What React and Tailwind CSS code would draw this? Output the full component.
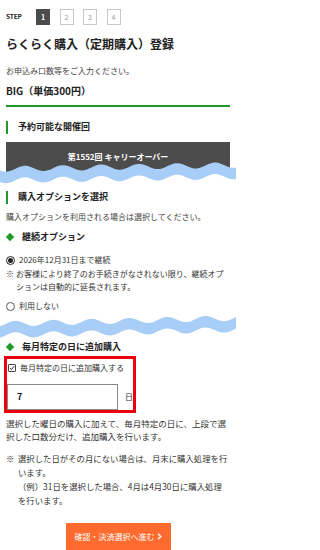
import React from 'react';

// Torn-edge marker: a light blue wavy ribbon drawn across the page
function Wave({ base, slope, phase, className }) {
  const top = [];
  const bottom = [];
  for (let x = 0; x <= 236; x += 2) {
    const y = base - slope * (x / 236) + 2.8 * Math.sin((2 * Math.PI * x) / 38 + phase);
    top.push(`${x},${y.toFixed(2)}`);
    bottom.unshift(`${x},${(y + 11.5).toFixed(2)}`);
  }
  const d = `M${top.join(' L')} L${bottom.join(' L')} Z`;
  return (
    <svg width="236" height="24" viewBox="0 0 236 24" className={`relative block -ml-[6px] ${className}`}>
      <path d={d} fill="#a8cdf6" />
    </svg>
  );
}

function SectionHeading({ children, className = '' }) {
  return (
    <div className={`flex items-center h-[14px] ${className}`}>
      <span className="w-[2px] h-[13px] bg-[#1f9a2a]" />
      <span className="ml-[10px] text-[9px] leading-[14px] font-bold text-[#222]">{children}</span>
    </div>
  );
}

function DiamondHeading({ children, className = '' }) {
  return (
    <div className={`flex items-center h-[14px] ${className}`}>
      <span className="ml-[1px] w-[6px] h-[6px] rotate-45 bg-[#1f9a2a]" />
      <span className="ml-[9px] text-[9px] leading-[14px] font-bold text-[#222]">{children}</span>
    </div>
  );
}

export default function App() {
  return (
    <div className="w-[236px] h-[550px] overflow-hidden bg-white px-[6px] font-['Noto_Sans_CJK_JP','Noto_Sans',sans-serif] text-[#333]">
      {/* Step indicator */}
      <div className="flex items-center pt-[9px]">
        <span className="w-[30px] text-[6.5px] font-bold text-[#222] tracking-tight">STEP</span>
        <div className="flex gap-[9.5px]">
          {[1, 2, 3, 4].map((n) =>
            n === 1 ? (
              <span key={n} className="w-[14px] h-[16px] flex items-center justify-center bg-[#4c4c4c] text-white text-[7px] font-bold">
                {n}
              </span>
            ) : (
              <span key={n} className="w-[14px] h-[16px] flex items-center justify-center border border-[#c8c8c8] text-[#9a9a9a] text-[7px]">
                {n}
              </span>
            )
          )}
        </div>
      </div>

      <h1 className="mt-[11px] text-[12px] leading-[16px] font-bold text-[#222] whitespace-nowrap">らくらく購入（定期購入）登録</h1>
      <p className="mt-[13px] text-[8px] leading-[12px] text-[#444]">お申込み口数等をご入力ください。</p>
      <p className="mt-[7px] text-[10px] leading-[14px] font-bold text-[#222]">BIG（単価300円）</p>
      <div className="mt-[7px] h-[2px] bg-[#1f9a2a]" />

      <SectionHeading className="mt-[13px]">予約可能な開催回</SectionHeading>
      <div className="mt-[8px] h-[30px] bg-[#4c4c4c] flex justify-center pt-[9px]">
        <span className="text-[8px] leading-[12px] font-bold text-white">第1552回 キャリーオーバー</span>
      </div>
      <Wave base={9} slope={4} phase={0.6} className="-mt-[12px]" />

      <SectionHeading className="mt-[6px]">購入オプションを選択</SectionHeading>
      <p className="mt-[7px] text-[8px] leading-[12px] text-[#444] whitespace-nowrap">購入オプションを利用される場合は選択してください。</p>

      <DiamondHeading className="mt-[7px]">継続オプション</DiamondHeading>
      <label className="mt-[9px] flex items-center h-[14px]">
        <span className="w-[9px] h-[9px] rounded-full border border-[#222] flex items-center justify-center">
          <span className="w-[5px] h-[5px] rounded-full bg-[#222]" />
        </span>
        <span className="ml-[4px] text-[8px] leading-[14px] text-[#333]">2026年12月31日まで継続</span>
      </label>
      <div className="flex text-[8px] leading-[13px] text-[#333]">
        <span className="w-[10px] shrink-0">※</span>
        <span>お客様により終了のお手続きがなされない限り、継続オプションは自動的に延長されます。</span>
      </div>
      <label className="mt-[6px] flex items-center h-[14px]">
        <span className="w-[9px] h-[9px] rounded-full border border-[#555]" />
        <span className="ml-[4px] text-[8px] leading-[14px] text-[#333]">利用しない</span>
      </label>
      <Wave base={10} slope={6} phase={2.2} className="mt-[1px]" />

      <DiamondHeading className="mt-[2px]">毎月特定の日に追加購入</DiamondHeading>

      {/* Highlighted input block */}
      <div className="mt-[2px] -ml-[2px] w-[132px] border-[3px] border-[#e8000e]">
        <label className="mt-[2px] flex items-center h-[14px] pl-[1px]">
          <span className="w-[8px] h-[8px] border border-[#444] rounded-[1px] flex items-center justify-center">
            <svg width="6" height="6" viewBox="0 0 6 6">
              <path d="M0.8 3.1 L2.4 4.6 L5.2 1.2" fill="none" stroke="#222" strokeWidth="1" />
            </svg>
          </span>
          <span className="ml-[4px] text-[8px] leading-[14px] text-[#333]">毎月特定の日に追加購入する</span>
        </label>
        <div className="mt-[9px] flex items-center">
          <div className="w-[112px] h-[26px] border border-[#888] flex items-center pl-[9px]">
            <span className="text-[9px] font-bold text-[#111]">7</span>
          </div>
          <span className="ml-[7px] text-[8px] text-[#333]">日</span>
        </div>
      </div>

      <p className="mt-[4px] text-[8.5px] leading-[13px] text-[#333] whitespace-nowrap">
        選択した曜日の購入に加えて、毎月特定の日に、上段で選
        <br />
        択した口数分だけ、追加購入を行います。
      </p>
      <div className="mt-[8px] flex text-[8.4px] leading-[14px] text-[#333] whitespace-nowrap">
        <span className="w-[12px] shrink-0">※</span>
        <div>
          <p>
            選択した日がその月にない場合は、月末に購入処理を行
            <br />
            います。
          </p>
          <p>
            （例）31日を選択した場合、4月は4月30日に購入処理
            <br />
            を行います。
          </p>
        </div>
      </div>

      <div className="mt-[16px] flex justify-center">
        <button type="button" className="w-[105px] h-[27px] bg-[#ff6a2e] text-white text-[8px] flex items-center justify-center gap-[2px]">
          確認・決済選択へ進む
          <svg width="5" height="7" viewBox="0 0 5 7">
            <path d="M1 0.8 L3.8 3.5 L1 6.2" fill="none" stroke="#fff" strokeWidth="1.4" />
          </svg>
        </button>
      </div>
    </div>
  );
}
